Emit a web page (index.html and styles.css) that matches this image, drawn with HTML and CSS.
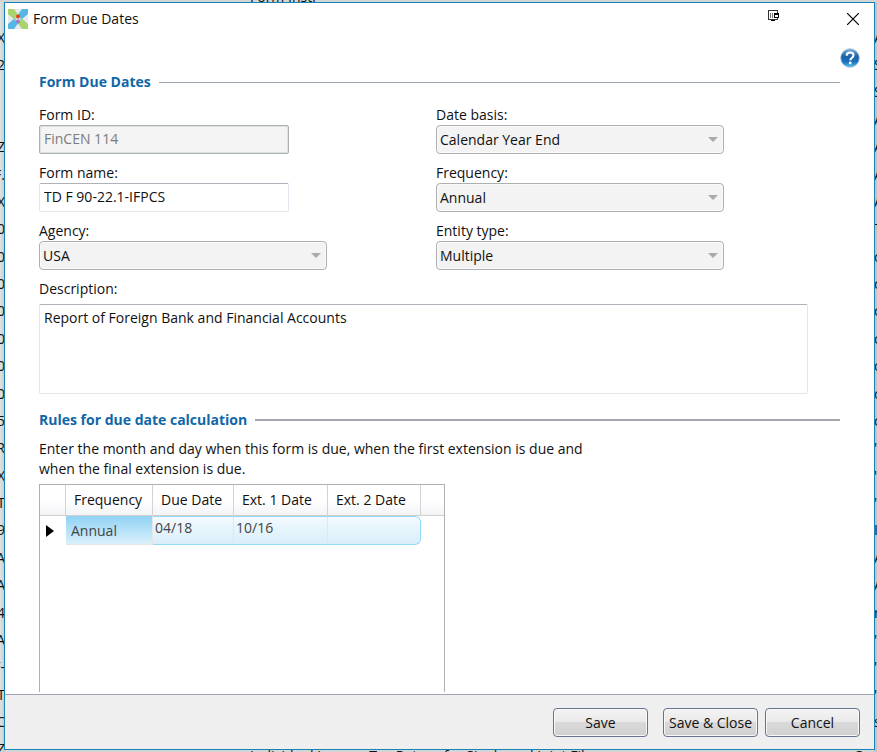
FILE: index.html
```
<!DOCTYPE html>
<html lang="en">
<head>
    <meta charset="utf-8">
    <meta name="viewport" content="width=device-width, initial-scale=1.0">
    <title>Form Due Dates</title>
    <link rel="stylesheet" href="styles.css">
</head>
<body>
    <!-- Forms list behind the dialog -->
    <div class="backdrop" aria-hidden="true">
        <div class="backdrop-top"><span>Form Instr</span></div>
        <div class="strip strip-left">
            <span>X</span><span>2</span><span></span><span></span><span>Z</span><span>F.</span><span>X</span>
            <span>0</span><span>0</span><span>0</span><span>0</span><span>0</span><span>0</span><span>0</span>
            <span>5</span><span>R</span><span>X</span><span>T</span><span>9</span><span>A</span><span>A</span>
            <span>4</span><span>A</span><span>F-</span><span>T</span><span>C</span><span>Z</span>
        </div>
        <div class="strip strip-right">
            <span>A</span><span>S</span><span>S</span><span>A</span><span>A</span><span>A</span><span>A</span>
            <span>T</span><span>c</span><span>c</span><span>c</span><span>c</span><span>c</span><span>c</span>
            <span>c</span><span>"</span><span>"</span><span>"</span><span>I</span><span>A</span><span>A</span>
            <span>r</span><span>"</span><span>"</span><span>"</span><span>s</span><span></span>
        </div>
        <div class="backdrop-bottom">
            <span>Individual Income Tax Return for Single and Joint Filers</span>
            <span>Cur</span>
        </div>
    </div>

    <form class="dialog">
        <header class="titlebar">
            <svg class="logo" width="20" height="20" viewBox="0 0 20 20">
                <rect width="20" height="20" fill="#e8eaed"/>
                <path d="M0 0h6l5 7-4 4-7-6z" fill="#a9d46c"/>
                <path d="M20 0h-6L9 7l4 4 7-6z" fill="#55b7e6"/>
                <path d="M0 20h6l5-7-4-4-7 6z" fill="#55b7e6"/>
                <path d="M20 20h-6l-5-7 4-4 7 6z" fill="#a9d46c"/>
                <path d="M10 6l4 4-4 4-4-4z" fill="#d5dde0"/>
                <circle cx="10" cy="7.500" r="2" fill="#f03a17"/>
                <circle cx="7" cy="10" r="1" fill="#88c5c2"/>
                <circle cx="13" cy="10" r="1" fill="#88c5c2"/>
                <circle cx="10" cy="12.500" r="2" fill="#a276c8"/>
            </svg>
            <span class="title">Form Due Dates</span>
            <svg class="tool" width="12" height="12" viewBox="0 0 12 12" shape-rendering="crispEdges">
                <path d="M.5.5h9v9h-9z" fill="#fff" stroke="#333"/>
                <path d="M2 3h1v5H2zM4 3h1v5H4z" fill="#777"/>
                <path d="M6 3h5v5H6z" fill="#000"/>
                <path d="M7 5h3v2H7z" fill="#fff"/>
                <path d="M3 10h4v1H3z" fill="#000"/>
            </svg>
            <button type="button" class="close" aria-label="Close">
                <svg width="12" height="12" viewBox="0 0 12 12"><path d="M0 0l12 12M12 0L0 12" stroke="#000" stroke-width="1.2"/></svg>
            </button>
        </header>

        <div class="helpbar">
            <button type="button" class="help" aria-label="Help">
                <svg width="20" height="20" viewBox="0 0 20 20">
                    <defs>
                        <linearGradient id="ball" x1="0" y1="0" x2="0" y2="1">
                            <stop offset="0" stop-color="#7fb4dc"/>
                            <stop offset=".4" stop-color="#1c62a8"/>
                            <stop offset=".7" stop-color="#1b6fbb"/>
                            <stop offset="1" stop-color="#52c4f2"/>
                        </linearGradient>
                    </defs>
                    <circle cx="10" cy="10" r="9.3" fill="url(#ball)" stroke="#a9bfd4" stroke-width=".8"/>
                    <path d="M6.700 7.600C6.800 5.400 8.200 4.500 10.100 4.500c2.100 0 3.400 1.100 3.400 2.800 0 2.400-3.200 2.500-3.200 5" fill="none" stroke="#fff" stroke-width="2.200"/>
                    <circle cx="10.200" cy="15" r="1.400" fill="#fff"/>
                </svg>
            </button>
        </div>

        <main class="content">
            <h2 class="section">Form Due Dates</h2>
            <div class="fields">
                <div class="field">
                    <label for="form-id">Form ID:</label>
                    <input id="form-id" class="box" type="text" value="FinCEN 114" disabled>
                </div>
                <div class="field">
                    <label for="date-basis">Date basis:</label>
                    <select id="date-basis" class="combo"><option>Calendar Year End</option></select>
                </div>
                <div class="field">
                    <label for="form-name">Form name:</label>
                    <input id="form-name" class="box" type="text" value="TD F 90-22.1-IFPCS">
                </div>
                <div class="field">
                    <label for="frequency">Frequency:</label>
                    <select id="frequency" class="combo"><option>Annual</option></select>
                </div>
                <div class="field">
                    <label for="agency">Agency:</label>
                    <select id="agency" class="combo"><option>USA</option></select>
                </div>
                <div class="field">
                    <label for="entity-type">Entity type:</label>
                    <select id="entity-type" class="combo"><option>Multiple</option></select>
                </div>
            </div>
            <div class="description">
                <label for="description">Description:</label>
                <textarea id="description" class="box">Report of Foreign Bank and Financial Accounts</textarea>
            </div>

            <h2 class="section section-rules">Rules for due date calculation</h2>
            <p class="hint">Enter the month and day when this form is due, when the first extension is due and when the final extension is due.</p>
            <div class="rules">
                <table>
                    <colgroup>
                        <col class="col-mark"><col class="col-frequency"><col class="col-due">
                        <col class="col-ext1"><col class="col-ext2"><col>
                    </colgroup>
                    <thead>
                        <tr>
                            <th></th>
                            <th>Frequency</th>
                            <th>Due Date</th>
                            <th>Ext. 1 Date</th>
                            <th>Ext. 2 Date</th>
                            <th></th>
                        </tr>
                    </thead>
                    <tbody>
                        <tr>
                            <td class="mark"><svg width="8" height="12" viewBox="0 0 8 12"><path d="M0 0l8 6-8 6z"/></svg></td>
                            <td class="current">Annual</td>
                            <td class="date">04/18</td>
                            <td class="date">10/16</td>
                            <td class="date last"></td>
                            <td></td>
                        </tr>
                    </tbody>
                </table>
            </div>
        </main>

        <footer class="actions">
            <button type="button">Save</button>
            <button type="button" class="save-close">Save &amp; Close</button>
            <button type="button">Cancel</button>
        </footer>
    </form>
</body>
</html>
```
FILE: styles.css
```
* {
    margin: 0;
    padding: 0;
    box-sizing: border-box;
}

body {
    height: 100vh;
    min-height: 700px;
    position: relative;
    overflow: hidden;
    color: #111;
    font-family: "Open Sans", "Noto Sans", sans-serif;
    font-size: 14px;
    line-height: 20px;
}

input, select, textarea, button {
    font: inherit;
    color: inherit;
}

/* list behind the dialog */
.backdrop {
    height: 100%;
    display: grid;
    grid-template: 2px 1fr 2px / 5px 1fr 3px;
    background: #d3d6d6;
    overflow: hidden;
}

.backdrop-top,
.backdrop-bottom {
    grid-column: 1 / -1;
    height: 2px;
    overflow: hidden;
    display: flex;
    padding-left: 250px;
}

.backdrop-top {
    align-items: flex-end;
    line-height: 10px;
}

.backdrop-bottom {
    grid-row: 3;
    justify-content: space-between;
    line-height: 12px;
}

.strip {
    grid-row: 2;
    display: flex;
    flex-direction: column;
    padding-top: 22px;
    margin-bottom: -13px;
    overflow: hidden;
}

.strip span {
    flex: 1;
    display: flex;
    align-items: center;
}

.strip-left {
    grid-column: 1;
    background: linear-gradient(to right, #dfe2e3, #c3c9cb);
}

.strip-left span {
    justify-content: flex-end;
}

.strip-right {
    grid-column: 3;
    background: #c4c4c4;
}

/* dialog window */
.dialog {
    position: absolute;
    inset: 2px 2px 2px 4px;
    display: flex;
    flex-direction: column;
    background: #fff;
    border: 1px solid #1883b7;
}

.titlebar {
    display: flex;
    align-items: center;
    height: 31px;
    padding: 0 15px 0 3px;
}

.title {
    flex: 1;
    margin-left: 5px;
}

.tool {
    margin: 0 67px 5px 0;
}

.close,
.help {
    display: flex;
    border: none;
    background: none;
}

.helpbar {
    display: flex;
    justify-content: flex-end;
    padding: 14px 14px 0 0;
}

.content {
    flex: 1;
    min-height: 0;
    display: flex;
    flex-direction: column;
    padding: 4px 34px 2px;
}

.section {
    display: flex;
    align-items: center;
    gap: 8px;
    font-size: 14px;
    color: #0f67a8;
}

.section::after {
    content: "";
    flex: 1;
    height: 1px;
    background: #9ba5b1;
}

.section-rules {
    margin-top: 16px;
}

.section-rules::after {
    height: 2px;
    background: #a4a8ae;
}

.fields {
    display: grid;
    grid-template-columns: minmax(0, 397px) minmax(0, 288px);
    row-gap: 9px;
    margin-top: 13px;
}

.field,
.description {
    display: flex;
    flex-direction: column;
    align-items: flex-start;
}

.box {
    width: 250px;
    height: 29px;
    padding: 0 4px 2px;
    background: #fff;
    border: 1px solid #e2e5ec;
    border-top-color: #aeb1b8;
    border-radius: 2px;
}

.box:disabled {
    color: #7c7c7c;
    background: #f4f4f4;
    border: 1px solid #abb0b3;
    box-shadow: inset 0 0 0 1px #dde1e3;
}

.combo {
    width: 100%;
    max-width: 288px;
    height: 29px;
    padding: 0 3px;
    appearance: none;
    border: 1px solid #acb0b2;
    border-radius: 4px;
    background: #f3f3f3 url("data:image/svg+xml,%3Csvg xmlns='http://www.w3.org/2000/svg' width='10' height='5'%3E%3Cpath d='M0 0h10L5 5z' fill='%23aaa'/%3E%3C/svg%3E") no-repeat right 5px center;
    box-shadow: inset 0 0 0 1px #fafafa;
}

.description {
    margin: 9px 32px 0 0;
    gap: 5px;
}

.description .box {
    width: 100%;
    height: 90px;
    padding: 3px 4px;
    resize: none;
}

.hint {
    max-width: 570px;
    margin-top: 9px;
}

/* rules grid */
.rules {
    flex: 1;
    min-height: 0;
    width: 406px;
    max-width: 100%;
    margin-top: 5px;
    border: 1px solid #b1b1b1;
    border-bottom: none;
}

table {
    width: 100%;
    table-layout: fixed;
    border-collapse: separate;
    border-spacing: 0;
}

.col-mark { width: 26px; }
.col-frequency { width: 87px; }
.col-due { width: 81px; }
.col-ext1 { width: 94px; }
.col-ext2 { width: 93px; }

th {
    height: 31px;
    padding-left: 8px;
    font-weight: normal;
    text-align: left;
    white-space: nowrap;
    background: linear-gradient(#fff 50%, #f3f4f6);
    border-right: 1px solid #d2d3d4;
    border-bottom: 1px solid #cfcfcf;
}

th:last-child {
    border-right: none;
}

td {
    height: 29px;
    color: #444;
}

.mark {
    padding-left: 6px;
}

.mark svg {
    display: block;
}

.current {
    padding: 2px 0 0 5px;
    background: linear-gradient(#90d2f5, #daf0fb);
    border-right: 1px solid #e6e6e6;
    border-bottom: 1px solid #e6e6e6;
}

.date {
    padding: 1px 2px;
    vertical-align: top;
    background: linear-gradient(#f2fafe, #d9eefa);
    border: 1px solid #94d9f8;
    border-width: 1px 0;
    border-right: 1px solid #e2e6e9;
}

.date.last {
    border-right-color: #94d9f8;
    border-radius: 0 6px 6px 0;
}

/* bottom buttons */
.actions {
    display: flex;
    justify-content: flex-end;
    gap: 7px;
    padding: 13px 14px 12px;
    background: #efefef;
    border-top: 1px solid #a1a8b3;
}

.actions button {
    width: 95px;
    height: 29px;
    white-space: nowrap;
    background: linear-gradient(#f4f4f4, #e9e9e9 48%, #d9d9d9 50%, #d0d0d0);
    border: 1px solid #65758f;
    border-radius: 4px;
    box-shadow: inset 0 0 0 1px #f8f8f8;
}

.actions .save-close {
    margin-left: 8px;
}
```
